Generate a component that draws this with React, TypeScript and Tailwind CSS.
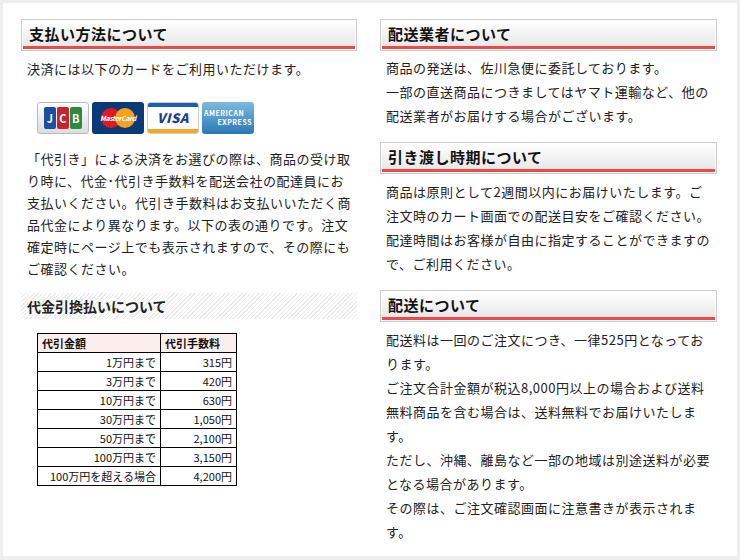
import React from "react";

const font = { fontFamily: '"Noto Sans CJK JP", "Liberation Sans", sans-serif' };

function Heading({ children }: { children: React.ReactNode }) {
  return (
    <div className="border border-[#cccccc] p-[1px]">
      <div className="h-[25px] bg-gradient-to-b from-white to-[#e8e8e8] px-[6px] flex items-center text-[15px] font-bold text-[#111]">
        {children}
      </div>
      <div className="h-[3px] bg-[#f04848]" />
    </div>
  );
}

const rows = [
  ["1万円まで", "315円"],
  ["3万円まで", "420円"],
  ["10万円まで", "630円"],
  ["30万円まで", "1,050円"],
  ["50万円まで", "2,100円"],
  ["100万円まで", "3,150円"],
  ["100万円を超える場合", "4,200円"],
];

function Cards() {
  return (
    <div className="flex gap-[3px] ml-[16px] mt-[22px]">
      <div className="w-[52px] h-[32px] rounded-[3px] border border-[#bbb] bg-gradient-to-b from-white to-[#ddd] flex items-center justify-center gap-[1px]">
        <span className="w-[12px] h-[22px] rounded-[2px] bg-[#1c4fa0] text-white text-[11px] font-bold flex items-center justify-center">J</span>
        <span className="w-[12px] h-[22px] rounded-[2px] bg-[#c8232c] text-white text-[11px] font-bold flex items-center justify-center">C</span>
        <span className="w-[12px] h-[22px] rounded-[2px] bg-[#2a8a3e] text-white text-[11px] font-bold flex items-center justify-center">B</span>
      </div>
      <div className="w-[52px] h-[32px] rounded-[3px] bg-[#0a3a78] relative flex items-center justify-center overflow-hidden">
        <span className="absolute left-[9px] w-[20px] h-[20px] rounded-full bg-[#e01a22]" />
        <span className="absolute right-[9px] w-[20px] h-[20px] rounded-full bg-[#f7a21b]" />
        <span className="relative text-white text-[7px] font-bold italic tracking-tighter">MasterCard</span>
      </div>
      <div className="w-[52px] h-[32px] rounded-[3px] border border-[#ccc] overflow-hidden flex flex-col">
        <div className="h-[6px] bg-[#1a5fb4]" />
        <div className="flex-1 bg-white flex items-center justify-center text-[#1a3f8f] text-[13px] font-extrabold italic">VISA</div>
        <div className="h-[6px] bg-[#f6a623]" />
      </div>
      <div className="w-[52px] h-[32px] rounded-[3px] bg-gradient-to-b from-[#7cbbe0] to-[#2a78b8] flex flex-col justify-center text-white text-[7px] font-bold leading-[9px] px-[2px]">
        <span>AMERICAN</span>
        <span className="self-end">EXPRESS</span>
      </div>
    </div>
  );
}

export default function App() {
  return (
    <div className="w-[740px] h-[560px] bg-[#eeeeee] p-[3px] pb-[4px]" style={font}>
      <div className="h-full bg-white flex gap-[23px] pl-[18px] pt-[16px] text-[13px] tracking-[0.5px] text-[#222]">
        <div className="w-[336px] leading-[22px]">
          <Heading>支払い方法について</Heading>
          <p className="px-[6px] mt-[7px]">決済には以下のカードをご利用いただけます。</p>
          <Cards />
          <p className="px-[6px] mt-[14px]">
            「代引き」による決済をお選びの際は、商品の受け取り時に、代金･代引き手数料を配送会社の配達員にお支払いください。代引き手数料はお支払いいただく商品代金により異なります。以下の表の通りです。注文確定時にページ上でも表示されますので、その際にもご確認ください。
          </p>
          <div className="mt-[13px] h-[26px] flex items-center px-[6px] text-[14px] font-bold tracking-normal bg-[repeating-linear-gradient(135deg,#ececec_0px,#ececec_1px,#ffffff_1px,#ffffff_3px)]">
            代金引換払いについて
          </div>
          <table className="ml-[16px] mt-[14px] border-collapse text-[11px] leading-[18px] tracking-normal text-[#111]">
            <thead>
              <tr className="bg-[#fdeeee]">
                <th className="border border-black w-[123px] text-left px-[4px] font-bold">代引金額</th>
                <th className="border border-black w-[76px] text-left px-[4px] font-bold">代引手数料</th>
              </tr>
            </thead>
            <tbody>
              {rows.map(([a, b]) => (
                <tr key={a}>
                  <td className="border border-black text-right px-[4px]">{a}</td>
                  <td className="border border-black text-right px-[4px]">{b}</td>
                </tr>
              ))}
            </tbody>
          </table>
        </div>
        <div className="w-[337px] leading-[24px]">
          <Heading>配送業者について</Heading>
          <p className="px-[6px] mt-[5px]">
            商品の発送は、佐川急便に委託しております。<br />
            一部の直送商品につきましてはヤマト運輸など、他の配送業者がお届けする場合がございます。
          </p>
          <div className="mt-[14px]">
            <Heading>引き渡し時期について</Heading>
          </div>
          <p className="px-[6px] mt-[6px]">
            商品は原則として2週間以内にお届けいたします。ご注文時のカート画面での配送目安をご確認ください。配達時間はお客様が自由に指定することができますので、ご利用ください。
          </p>
          <div className="mt-[14px]">
            <Heading>配送について</Heading>
          </div>
          <p className="px-[6px] mt-[6px]">
            配送料は一回のご注文につき、一律525円となっております。<br />
            ご注文合計金額が税込8,000円以上の場合および送料無料商品を含む場合は、送料無料でお届けいたします。<br />
            ただし、沖縄、離島など一部の地域は別途送料が必要となる場合があります。<br />
            その際は、ご注文確認画面に注意書きが表示されます。
          </p>
        </div>
      </div>
    </div>
  );
}
